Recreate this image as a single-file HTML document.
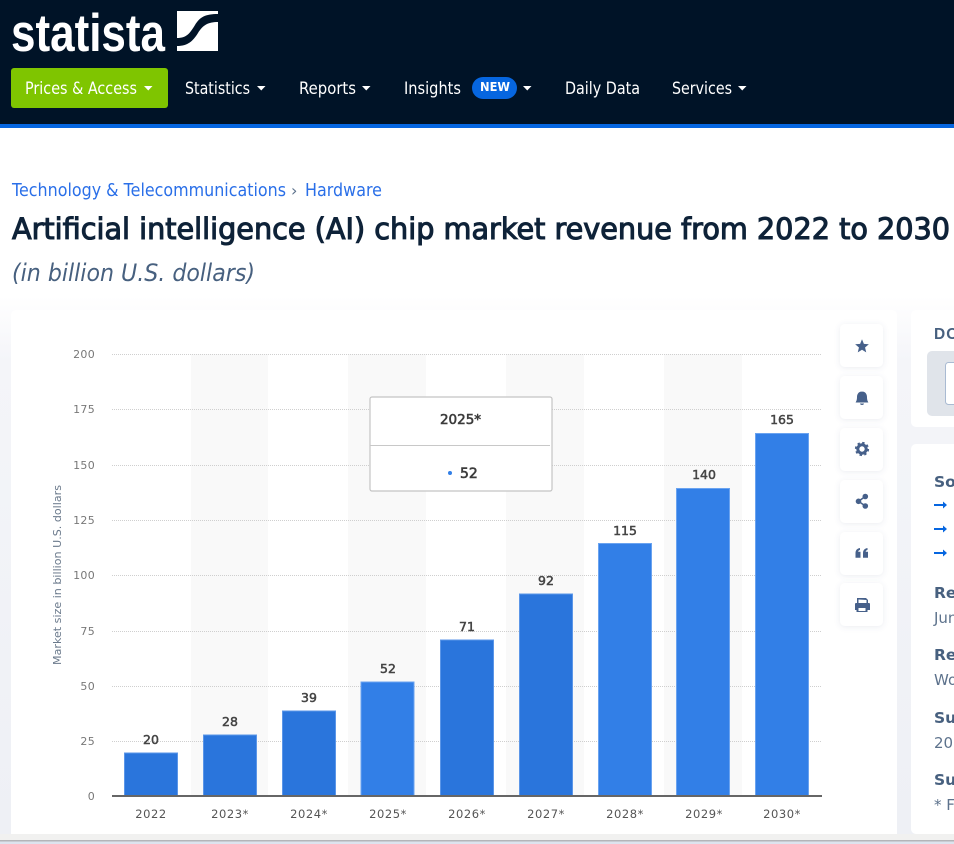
<!DOCTYPE html>
<html><head><meta charset="utf-8"><title>Statista</title>
<style>
html,body{margin:0;padding:0;width:954px;height:844px;overflow:hidden;background:#fff}
svg{display:block}
text{font-family:"DejaVu Sans","Liberation Sans",sans-serif}
.nav{font-size:17px;fill:#fff}
.yl{font-size:11px;fill:#787878;text-anchor:end;letter-spacing:.3px}
.xl{font-size:11.5px;fill:#555;text-anchor:middle;letter-spacing:.55px}
.v{font-size:12.5px;fill:#444;stroke:#444;stroke-width:.5px;text-anchor:middle}
.h{font-size:15.5px;font-weight:bold;fill:#47607f}
.b{font-size:15px;fill:#5d728c}
.ic{fill:#46608a}
</style></head><body>
<svg width="954" height="844" viewBox="0 0 954 844" xmlns="http://www.w3.org/2000/svg">
<defs>
<linearGradient id="pg" x1="0" y1="0" x2="0" y2="1"><stop offset="0" stop-color="#fff"/><stop offset=".12" stop-color="#f4f5f9"/><stop offset="1" stop-color="#eef0f5"/></linearGradient>
<filter id="s" x="-30%" y="-30%" width="160%" height="160%"><feDropShadow dx="0" dy="1" stdDeviation="3" flood-color="#5a6a8a" flood-opacity=".12"/></filter>
</defs>
<rect width="954" height="844" fill="#fff"/>
<!-- header -->
<rect width="954" height="124" fill="#001327"/>
<rect y="124" width="954" height="4" fill="#0666e0"/>
<text x="11" y="51" font-size="53" font-weight="bold" fill="#fff" textLength="154" lengthAdjust="spacingAndGlyphs" style="font-family:'Liberation Sans',sans-serif">statista</text>
<path d="M177 11H218V14C205 14 200 17 195 25C190 33 187 38 177 38Z" fill="#fff"/>
<path d="M218 22C208 22 203 25 198 33C193 41 188 46 177 46V51H218Z" fill="#fff"/>
<rect x="11" y="68" width="157" height="40" rx="3" fill="#7fc500"/>
<text class="nav" x="25" y="94" textLength="112" lengthAdjust="spacingAndGlyphs">Prices &amp; Access</text>
<path d="M144 86h8.500l-4.250 4.500z" fill="#fff"/>
<text class="nav" x="185" y="94" textLength="65" lengthAdjust="spacingAndGlyphs">Statistics</text>
<path d="M257 86h8.500l-4.250 4.500z" fill="#fff"/>
<text class="nav" x="299" y="94" textLength="57" lengthAdjust="spacingAndGlyphs">Reports</text>
<path d="M362 86h8.500l-4.250 4.500z" fill="#fff"/>
<text class="nav" x="404" y="94" textLength="57" lengthAdjust="spacingAndGlyphs">Insights</text>
<rect x="472" y="77" width="45" height="22" rx="11" fill="#0666e0"/>
<text x="480" y="91" font-size="12" font-weight="bold" fill="#fff" textLength="30" lengthAdjust="spacingAndGlyphs">NEW</text>
<path d="M523 86h8.500l-4.250 4.500z" fill="#fff"/>
<text class="nav" x="565" y="94" textLength="75" lengthAdjust="spacingAndGlyphs">Daily Data</text>
<text class="nav" x="672" y="94" textLength="60" lengthAdjust="spacingAndGlyphs">Services</text>
<path d="M738 86h8.500l-4.250 4.500z" fill="#fff"/>
<!-- heading -->
<text x="12" y="196" font-size="17.500" fill="#2a6fe8" textLength="274" lengthAdjust="spacingAndGlyphs">Technology &amp; Telecommunications</text>
<text x="291" y="196" font-size="16" fill="#5d728c">›</text>
<text x="305" y="196" font-size="17.500" fill="#2a6fe8" textLength="77" lengthAdjust="spacingAndGlyphs">Hardware</text>
<text x="12" y="239" font-size="29.500" fill="#0e2238" stroke="#0e2238" stroke-width="1.100" textLength="938" lengthAdjust="spacingAndGlyphs">Artificial intelligence (AI) chip market revenue from 2022 to 2030</text>
<text x="12" y="281" font-size="24" font-style="italic" fill="#47607f" textLength="243" lengthAdjust="spacingAndGlyphs">(in billion U.S. dollars)</text>
<!-- page bg under cards -->
<rect x="0" y="296" width="954" height="538" fill="url(#pg)"/>
<!-- main card -->
<rect x="11" y="310" width="886" height="530" rx="5" fill="#fff"/>
<!-- bands -->
<g fill="#f9f9f9">
<rect x="191" y="354" width="77" height="441"/>
<rect x="348" y="354" width="78" height="441"/>
<rect x="506" y="354" width="78" height="441"/>
<rect x="664" y="354" width="78" height="441"/>
</g>
<!-- grid -->
<g stroke="#cfcfcf" stroke-width="1" stroke-dasharray="1 1" fill="none">
<path d="M112 354.500H822M112 409.500H822M112 465.500H822M112 520.500H822M112 575.500H822M112 631.500H822M112 686.500H822M112 741.500H822"/>
</g>
<g>
<text class="yl" x="95" y="358">200</text>
<text class="yl" x="95" y="413">175</text>
<text class="yl" x="95" y="469">150</text>
<text class="yl" x="95" y="524">125</text>
<text class="yl" x="95" y="579">100</text>
<text class="yl" x="95" y="635">75</text>
<text class="yl" x="95" y="690">50</text>
<text class="yl" x="95" y="745">25</text>
<text class="yl" x="95" y="800">0</text>
</g>
<text transform="translate(61,665) rotate(-90)" font-size="10.500" fill="#6b7a8c" textLength="180" lengthAdjust="spacingAndGlyphs">Market size in billion U.S. dollars</text>
<!-- bars -->
<g fill="#2a75dc" stroke="#5b96e8" stroke-width="1">
<rect x="124.500" y="753" width="53" height="43"/>
<rect x="203.500" y="735" width="53" height="61"/>
<rect x="282.500" y="711" width="53" height="85"/>
<rect x="440.500" y="640" width="53" height="156"/>
<rect x="519.500" y="594" width="53" height="202"/>
</g>
<g fill="#327fe7" stroke="#6aa3f0" stroke-width="1">
<rect x="361" y="682" width="53" height="114"/>
<rect x="598.500" y="543.500" width="53" height="252.500"/>
<rect x="676.500" y="488.500" width="53" height="307.500"/>
<rect x="755.500" y="433.500" width="53" height="362.500"/>
</g>
<rect x="112" y="795" width="710" height="2" fill="#666"/>
<g>
<text class="v" x="151" y="744">20</text>
<text class="v" x="230" y="726">28</text>
<text class="v" x="309" y="702">39</text>
<text class="v" x="388" y="673">52</text>
<text class="v" x="467" y="631">71</text>
<text class="v" x="546" y="585">92</text>
<text class="v" x="625" y="535">115</text>
<text class="v" x="704" y="479">140</text>
<text class="v" x="782" y="424">165</text>
</g>
<g>
<text class="xl" x="151" y="818">2022</text>
<text class="xl" x="230" y="818">2023*</text>
<text class="xl" x="309" y="818">2024*</text>
<text class="xl" x="388" y="818">2025*</text>
<text class="xl" x="467" y="818">2026*</text>
<text class="xl" x="546" y="818">2027*</text>
<text class="xl" x="625" y="818">2028*</text>
<text class="xl" x="704" y="818">2029*</text>
<text class="xl" x="782" y="818">2030*</text>
</g>
<!-- tooltip -->
<rect x="370" y="397" width="182" height="94" rx="2" fill="#fff" stroke="#c4c4c4" stroke-width="1.200"/>
<rect x="370" y="445" width="180" height="1" fill="#c8c8c8"/>
<text x="460.500" y="424" font-size="13.500" fill="#3c3c3c" stroke="#3c3c3c" stroke-width=".6" text-anchor="middle">2025*</text>
<circle cx="450" cy="473" r="2" fill="#327fe7"/>
<text x="460" y="478" font-size="14" fill="#3c3c3c" stroke="#3c3c3c" stroke-width=".6">52</text>
<!-- action buttons -->
<g fill="#fff" filter="url(#s)">
<rect x="840" y="324" width="43" height="43" rx="5"/>
<rect x="840" y="376" width="43" height="43" rx="5"/>
<rect x="840" y="428" width="43" height="43" rx="5"/>
<rect x="840" y="480" width="43" height="43" rx="5"/>
<rect x="840" y="532" width="43" height="43" rx="5"/>
<rect x="840" y="583" width="43" height="43" rx="5"/>
</g>
<!-- star -->
<path class="ic" d="M862 339.300L863.880 343.910 868.850 344.280 865.040 347.490 866.230 352.320 862 349.700 857.770 352.320 858.960 347.490 855.150 344.280 860.120 343.910Z"/>
<!-- bell -->
<path class="ic" d="M862 391.500c-3.500 0-5 2.800-5 5.500 0 3-.6 4-1.400 5.500h12.800c-.8-1.500-1.400-2.500-1.400-5.500 0-2.700-1.500-5.500-5-5.500zM860 403.500h4c0 1-1 1.500-2 1.500s-2-.5-2-1.500z"/>
<!-- gear -->
<circle cx="862" cy="449" r="4.200" fill="none" stroke="#46608a" stroke-width="3"/>
<circle cx="862" cy="449" r="6" fill="none" stroke="#46608a" stroke-width="2.200" stroke-dasharray="2.360 2.350"/>
<!-- share -->
<g class="ic"><circle cx="865.300" cy="496.500" r="2.800"/><circle cx="865.300" cy="506" r="2.800"/><circle cx="858.500" cy="501.300" r="2.800"/><path d="M858.500 501.300L865.300 496.500M858.500 501.300L865.300 506" stroke="#46608a" stroke-width="1.500"/></g>
<!-- quote -->
<path class="ic" d="M855.500 553c0-2.800 1.500-4.500 4.500-5v2c-1.200.3-1.800.9-1.800 1.800h2.300v6h-5zM863 553c0-2.800 1.500-4.500 4.500-5v2c-1.200.3-1.800.9-1.800 1.800h2.300v6h-5z"/>
<!-- print -->
<path class="ic" fill-rule="evenodd" d="M858 598h8l2 2v3h1a1 1 0 0 1 1 1v6h-2.500v2h-11v-2H855v-6a1 1 0 0 1 1-1h1v-5zM858.500 599.500v3.500h8v-3zM858.500 608v3h7v-3z"/>
<!-- right cards -->
<rect x="911" y="310" width="60" height="117" rx="5" fill="#fff"/>
<text x="934" y="339" font-size="15.500" font-weight="bold" fill="#47607f" letter-spacing="1" style="font-family:'Liberation Sans',sans-serif">DOWNLOAD</text>
<rect x="927" y="351" width="50" height="65" rx="5" fill="#e0e4ea"/>
<rect x="945.500" y="362.500" width="40" height="42" rx="3" fill="#fff" stroke="#a9bad2"/>
<rect x="911" y="444" width="60" height="390" rx="5" fill="#fff"/>
<g>
<text class="h" x="934" y="487">Source</text>
<text class="h" x="934" y="598">Release date</text>
<text class="h" x="934" y="660">Region</text>
<text class="h" x="934" y="723">Survey</text>
<text class="h" x="934" y="785">Supplementary</text>
</g>
<g fill="#0666e0">
<path d="M934 504h9v-2.500l4 3.500-4 3.500v-2.500h-9z"/>
<path d="M934 528h9v-2.500l4 3.500-4 3.500v-2.500h-9z"/>
<path d="M934 552h9v-2.500l4 3.500-4 3.500v-2.500h-9z"/>
</g>
<text class="b" x="934" y="623">June 2024</text>
<text class="b" x="934" y="685">Worldwide</text>
<text class="b" x="934" y="748">2024</text>
<text class="b" x="934" y="810">* Forecast</text>
<!-- bottom edge -->
<rect y="834" width="954" height="6" fill="#f1f1f0"/>
<rect y="840" width="954" height="1.500" fill="#b4b4b8"/>
<rect y="841.500" width="954" height="2.500" fill="#dde3ee"/>
</svg>
</body></html>
